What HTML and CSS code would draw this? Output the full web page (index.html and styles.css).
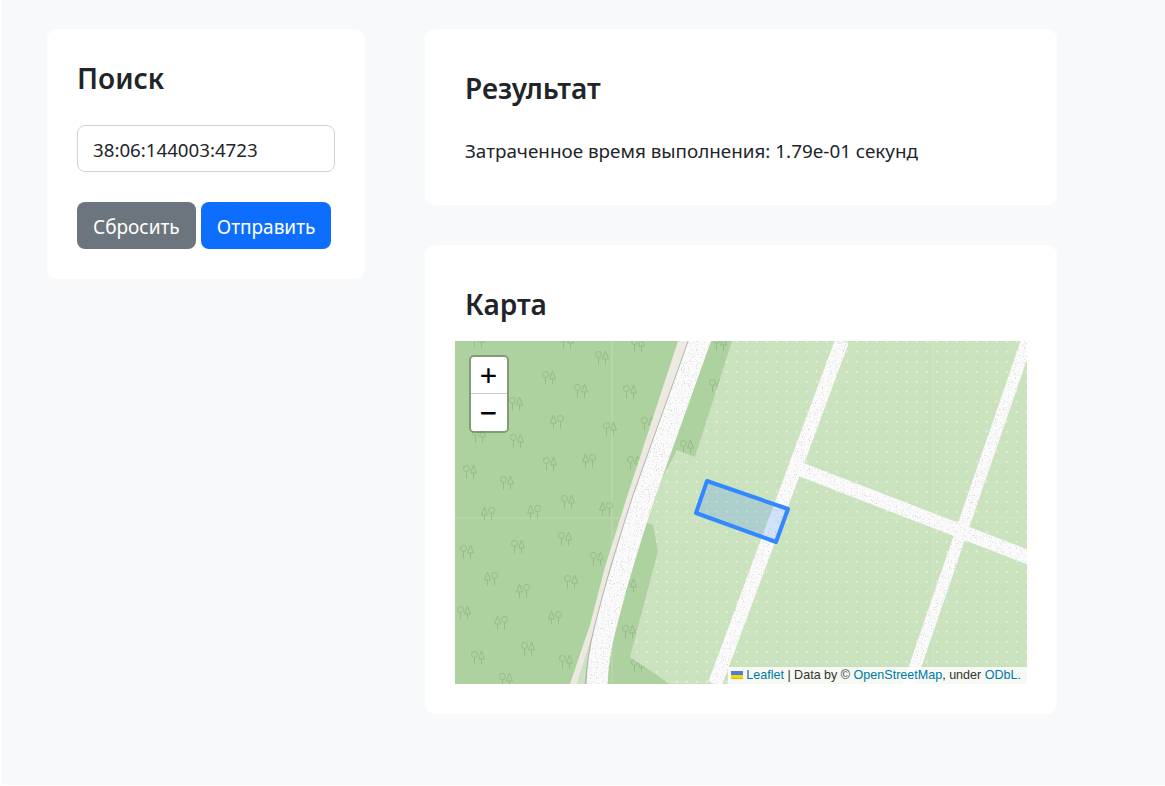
FILE: index.html
```html
<!DOCTYPE html>
<html lang="ru">
<head>
<meta charset="utf-8">
<title>Поиск</title>
<link rel="stylesheet" href="styles.css">
</head>
<body>
<div class="page">
  <aside class="card search-card">
    <h3 class="title search-title">Поиск</h3>
    <input class="field" type="text" value="38:06:144003:4723">
    <div class="actions">
      <button class="btn btn-grey" type="button">Сбросить</button>
      <button class="btn btn-blue" type="button">Отправить</button>
    </div>
  </aside>
  <main class="results">
    <section class="card result-card">
      <h3 class="title">Результат</h3>
      <p class="time">Затраченное время выполнения: 1.79e-01 секунд</p>
    </section>
    <section class="card map-card">
      <h3 class="title map-title">Карта</h3>
      <div class="map">
        <svg class="map-svg" viewBox="455 341 572 343" width="572" height="343" aria-hidden="true">
          <defs>
            <pattern id="dots" x="0" y="0" width="10" height="10" patternUnits="userSpaceOnUse">
              <path d="M6.7 0.7V2.7M5.7 1.7H7.7" stroke="#e6f2e0" stroke-width="1"/>
            </pattern>
            <filter id="speckle" filterUnits="userSpaceOnUse" x="455" y="341" width="572" height="343">
              <feTurbulence type="fractalNoise" baseFrequency="0.85" numOctaves="2" seed="4" result="noise"/>
              <feColorMatrix in="noise" type="matrix" values="0 0 0 0 0.62  0 0 0 0 0.62  0 0 0 0 0.62  3.5 0 0 0 -1.95"/>
              <feGaussianBlur stdDeviation="0.35"/>
              <feComposite operator="in" in2="SourceGraphic" result="specks"/>
              <feMerge><feMergeNode in="SourceGraphic"/><feMergeNode in="specks"/></feMerge>
            </filter>
            <g id="tp" fill="none" stroke="#95bb88" stroke-width="1">
              <circle cx="-3.5" cy="-3.5" r="3"/><path d="M-3.5 -0.5V6.5"/>
              <path d="M3.5 -7L6.5 1H0.5ZM3.5 1V6.5"/>
            </g>
            <g id="pt" fill="none" stroke="#95bb88" stroke-width="1">
              <path d="M-3.5 -7L-0.5 1H-6.5ZM-3.5 1V6.5"/>
              <circle cx="3.5" cy="-3.5" r="3"/><path d="M3.5 -0.5V6.5"/>
            </g>
          </defs>
          <rect x="455" y="341" width="572" height="343" fill="#aed1a0"/>
          <path d="M612 341V684M455 518H1027" stroke="#bedaaf" stroke-width="1"/>
          <g>
            <use href="#tp" x="478" y="341"/><use href="#tp" x="567" y="342"/><use href="#tp" x="638" y="345"/>
            <use href="#tp" x="602" y="358"/><use href="#tp" x="549" y="378"/><use href="#tp" x="581" y="391"/>
            <use href="#tp" x="630" y="392"/><use href="#tp" x="516" y="404"/><use href="#pt" x="557" y="422"/>
            <use href="#tp" x="610" y="429"/><use href="#tp" x="648" y="424"/><use href="#tp" x="479" y="436"/>
            <use href="#tp" x="517" y="441"/><use href="#tp" x="550" y="464"/><use href="#pt" x="589" y="461"/>
            <use href="#tp" x="634" y="463"/><use href="#tp" x="470" y="472"/><use href="#tp" x="507" y="483"/>
            <use href="#tp" x="568" y="502"/><use href="#pt" x="488" y="514"/><use href="#pt" x="534" y="512"/>
            <use href="#pt" x="606" y="509"/><use href="#tp" x="467" y="552"/><use href="#tp" x="518" y="547"/>
            <use href="#tp" x="565" y="539"/><use href="#tp" x="597" y="559"/><use href="#pt" x="491" y="579"/>
            <use href="#pt" x="523" y="591"/><use href="#tp" x="571" y="582"/><use href="#tp" x="630" y="586"/>
            <use href="#tp" x="464" y="613"/><use href="#pt" x="501" y="623"/><use href="#pt" x="555" y="618"/>
            <use href="#tp" x="629" y="632"/><use href="#tp" x="528" y="649"/><use href="#tp" x="478" y="658"/>
            <use href="#tp" x="566" y="662"/><use href="#tp" x="638" y="666"/><use href="#tp" x="506" y="680"/>
            <use href="#tp" x="720" y="344"/><use href="#tp" x="716" y="386"/><use href="#tp" x="687" y="447"/>
          </g>
          <polygon points="732,341 1027,341 1027,684 670,684 630,657 658,551 653,525 640,520 677,450 695,457" fill="#cbe2bf"/>
          <polygon points="732,341 1027,341 1027,684 670,684 630,657 658,551 653,525 640,520 677,450 695,457" fill="url(#dots)"/>
          <path d="M933 341V684M660 518H1027" stroke="#d2e6c8" stroke-width="1"/>
          <polygon points="678,341 695,341 632,500 610,567 593,633 577,684 570,684 590,625 605,567 626,500" fill="#ece9e1"/>
          <polygon points="577,684 593,633 587,684" fill="#cbe2bf"/>
          <path d="M701 335L642 500C629 540 614 590 604 630C599 650 596 670 595 690" fill="none" stroke="#b3b3ae" stroke-width="21"/>
          <g fill="none" stroke="#fbfbfb" filter="url(#speckle)">
            <path d="M702 335L643 500C630 540 615 590 605 630C600 650 597 670 597 690" stroke-width="21"/>
            <path d="M842 341L715 684" stroke-width="14"/>
            <path d="M797 468L1030 558" stroke-width="14"/>
            <path d="M1029 335L907 690" stroke-width="12"/>
          </g>
          <polygon points="707,481 788,509 776,542 696,513" fill="#3388ff" fill-opacity="0.2" stroke="#3388ff" stroke-width="4" stroke-linejoin="round"/>
        </svg>
        <div class="zoom">
          <button class="zoom-btn" type="button">+</button>
          <button class="zoom-btn" type="button">&#x2212;</button>
        </div>
        <div class="attribution">
          <svg class="flag" viewBox="0 0 12 8" width="12" height="8" aria-hidden="true"><path fill="#4C7BE1" d="M0 0h12v4H0z"/><path fill="#FFD500" d="M0 4h12v3H0z"/><path fill="#E0BC00" d="M0 7h12v1H0z"/></svg>
          <a href="#">Leaflet</a> | Data by © <a href="#">OpenStreetMap</a>, under <a href="#">ODbL.</a>
        </div>
      </div>
    </section>
  </main>
</div>
</body>
</html>
```
FILE: styles.css
```css
* { box-sizing: border-box; }
html, body { margin: 0; padding: 0; background: #fff; }
body { font-family: "Noto Sans", "Open Sans", sans-serif; color: #212529; }
.page {
  margin-left: 2px;
  height: 785px;
  background: #f8f9fa;
  display: flex;
  align-items: flex-start;
  gap: 60px;
  padding: 29px 0 0 45px;
  overflow: hidden;
}
.card { background: #fff; border-radius: 10px; }
.search-card { width: 318px; height: 250px; padding: 32px 30px 30px; }
.results { width: 632px; display: flex; flex-direction: column; gap: 40px; }
.result-card { padding: 42px 40px 40px; height: 176px; }
.map-card { padding: 42px 30px 30px; height: 469px; }
.title { margin: 0 0 33px; font-size: 28px; line-height: 34px; font-weight: 600; color: #212529; }
.search-title { margin-bottom: 30px; }
.map-title { margin: 0 0 20px 10px; }
.field {
  display: block;
  width: 258px;
  height: 47px;
  padding: 2px 15px 0;
  font: inherit;
  font-size: 18.7px;
  color: #212529;
  background: #fff;
  border: 1px solid #ced4da;
  border-radius: 8px;
  outline: none;
}
.actions { display: flex; gap: 5px; margin-top: 30px; }
.btn {
  height: 47px;
  padding: 2px 16px 0;
  border: 0;
  border-radius: 8px;
  font: inherit;
  font-size: 19px;
  color: #fff;
}
.btn-grey { background: #6c757d; }
.btn-blue { background: #0d6efd; }
.time { margin: 0; font-size: 18.85px; line-height: 27px; }
.map { position: relative; width: 572px; height: 343px; overflow: hidden; }
.map-svg { display: block; }
.zoom {
  position: absolute;
  left: 13.5px;
  top: 13.5px;
  width: 40px;
  display: flex;
  flex-direction: column;
  border: 2px solid rgba(0, 0, 0, 0.25);
  border-radius: 5px;
  background-clip: padding-box;
}
.zoom-btn {
  width: 36px;
  height: 37px;
  padding: 0;
  border: 0;
  background: #fff;
  color: #000;
  font-family: "DejaVu Sans Mono", monospace;
  font-size: 28px;
  line-height: 37px;
}
.zoom-btn:first-child { border-bottom: 1px solid #ccc; border-radius: 3px 3px 0 0; }
.zoom-btn:last-child { border-radius: 0 0 3px 3px; }
.attribution {
  position: absolute;
  right: 0;
  bottom: 0;
  height: 17px;
  padding: 0 6px 0 3px;
  background: rgba(255, 255, 255, 0.8);
  font-family: "Liberation Sans", Arial, sans-serif;
  font-size: 12.55px;
  line-height: 17px;
  color: #333;
  white-space: nowrap;
}
.attribution a { color: #0078a8; text-decoration: none; }
.flag { vertical-align: baseline; }
```
